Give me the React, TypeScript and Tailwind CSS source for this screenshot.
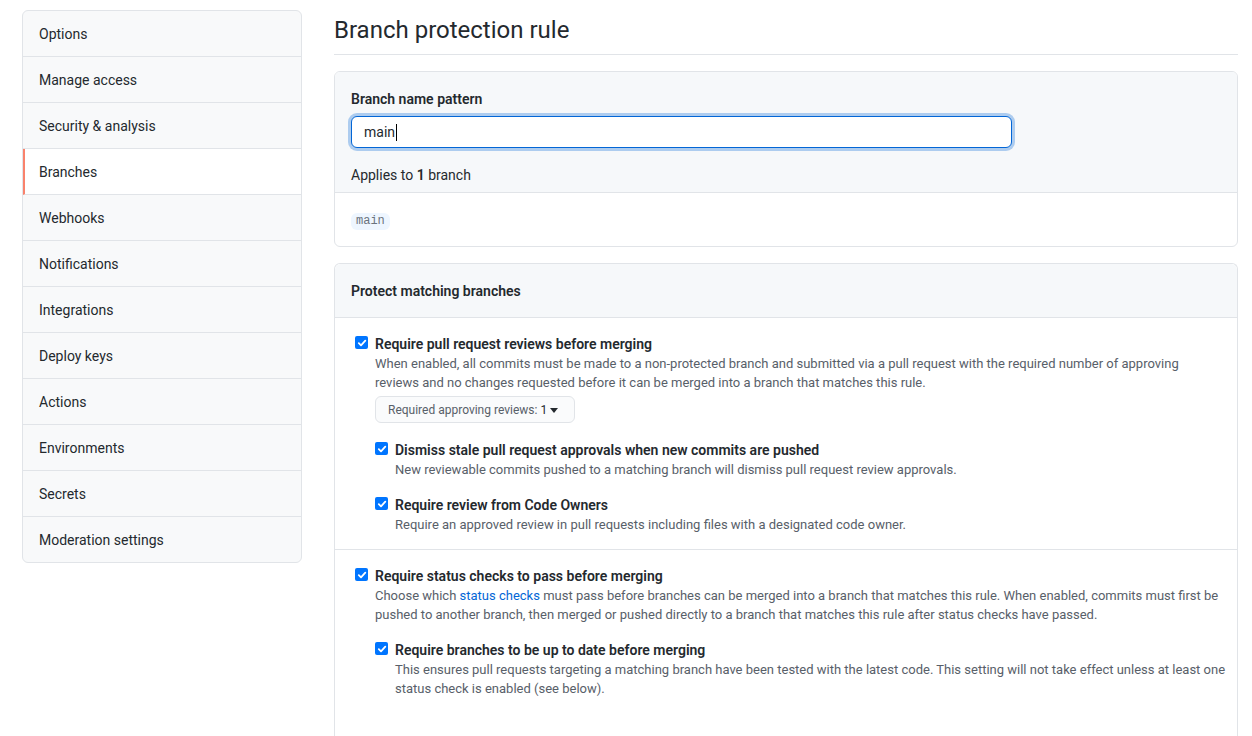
import React from "react";

const NAV = [
  "Options",
  "Manage access",
  "Security & analysis",
  "Branches",
  "Webhooks",
  "Notifications",
  "Integrations",
  "Deploy keys",
  "Actions",
  "Environments",
  "Secrets",
  "Moderation settings",
];

function Check() {
  return (
    <span className="mt-[3px] flex h-[13px] w-[13px] shrink-0 items-center justify-center rounded-[2px] bg-[#0075ff]">
      <svg width="10" height="10" viewBox="0 0 10 10" fill="none">
        <path d="M1.8 5.2 L4 7.3 L8.3 2.6" stroke="white" strokeWidth="1.8" strokeLinecap="round" strokeLinejoin="round" />
      </svg>
    </span>
  );
}

function Item({
  label,
  children,
  className = "",
}: {
  label: string;
  children?: React.ReactNode;
  className?: string;
}) {
  return (
    <div className={"flex " + className}>
      <div className="w-5 shrink-0">
        <Check />
      </div>
      <div className="min-w-0 flex-1">
        <div className="pt-px text-[14px] font-semibold leading-[20px] text-[#24292e]">{label}</div>
        {children}
      </div>
    </div>
  );
}

function Note({ children }: { children: React.ReactNode }) {
  return <p className="text-[13px] leading-[19px] text-[#586069]">{children}</p>;
}

export default function App() {
  return (
    <div
      className="flex min-h-screen gap-8 bg-white pl-[22px] pr-[14px] pt-[10px] text-[#24292e]"
      style={{ fontFamily: 'Roboto, "Noto Sans", sans-serif' }}
    >
      <nav className="w-[280px] shrink-0 self-start overflow-hidden rounded-md border border-[#e1e4e8] bg-[#f8f9fa]">
        {NAV.map((n, i) => (
          <div
            key={n}
            className={
              "flex items-center px-4 pt-[2px] text-[14px] " +
              (i < NAV.length - 1 ? "h-[46px] border-b border-[#e1e4e8] " : "h-[45px] ") +
              (n === "Branches" ? "border-l-2 border-l-[#f9826c] bg-white pl-[14px]" : "")
            }
          >
            {n}
          </div>
        ))}
      </nav>

      <main className="min-w-0 flex-1">
        <h1 className="border-b border-[#e1e4e8] pb-[6px] pt-[2px] text-[24px] font-normal leading-[36px]">
          Branch protection rule
        </h1>

        <section className="mt-4 overflow-hidden rounded-md border border-[#e1e4e8]">
          <div className="border-b border-[#e1e4e8] bg-[#f6f8fa] px-4 pb-[6px] pt-[17px]">
            <div className="text-[14px] font-semibold leading-[21px]">Branch name pattern</div>
            <div className="mt-[6px] flex h-[32px] w-[661px] items-center rounded-md border border-[#0366d6] bg-white px-3 text-[14px] shadow-[0_0_0_3px_rgba(3,102,214,0.3)]">
              main
              <span className="ml-[1px] inline-block h-[17px] w-px bg-black" />
            </div>
            <p className="mt-[17px] text-[14px] leading-[21px]">
              Applies to <span className="font-semibold">1</span> branch
            </p>
          </div>
          <div className="flex h-[53px] items-center px-4 pt-[4px]">
            <code
              className="rounded-md bg-[#eef6ff] px-[5px] py-[1px] text-[12px] leading-[15px] text-[#6a737d]"
              style={{ fontFamily: '"Liberation Mono", "DejaVu Sans Mono", monospace' }}
            >
              main
            </code>
          </div>
        </section>

        <section className="mt-4 rounded-t-md border border-b-0 border-[#e1e4e8]">
          <div className="rounded-t-md border-b border-[#e1e4e8] bg-[#f6f8fa] px-4 pb-[15px] pt-[17px] text-[14px] font-semibold leading-[21px]">
            Protect matching branches
          </div>

          <div className="border-b border-[#e1e4e8] pb-[15px] pl-5 pr-4 pt-[15px]">
            <Item label="Require pull request reviews before merging">
              <Note>
                When enabled, all commits must be made to a non-protected branch and submitted via a pull request with the
                required number of approving reviews and no changes requested before it can be merged into a branch that
                matches this rule.
              </Note>
              <div className="mt-[4px] flex h-[27px] w-[200px] items-center whitespace-nowrap rounded-md border border-[#e1e4e8] bg-[#fafbfc] px-3 text-[12px] text-[#586069]">
                Required approving reviews:&nbsp;<span className="text-[#24292e]">1</span>
                <span className="ml-[3px] mt-px h-0 w-0 border-x-[4px] border-t-[5px] border-x-transparent border-t-[#24292e]" />
              </div>
              <Item className="mt-4" label="Dismiss stale pull request approvals when new commits are pushed">
                <Note>New reviewable commits pushed to a matching branch will dismiss pull request review approvals.</Note>
              </Item>
              <Item className="mt-[15px]" label="Require review from Code Owners">
                <Note>Require an approved review in pull requests including files with a designated code owner.</Note>
              </Item>
            </Item>
          </div>

          <div className="pb-10 pl-5 pr-[8px] pt-[15px]">
            <Item label="Require status checks to pass before merging">
              <Note>
                Choose which <span className="text-[#0366d6]">status checks</span> must pass before branches can be merged
                into a branch that matches this rule. When enabled, commits must first be pushed to another branch, then
                merged or pushed directly to a branch that matches this rule after status checks have passed.
              </Note>
              <Item className="mt-[15px]" label="Require branches to be up to date before merging">
                <Note>
                  This ensures pull requests targeting a matching branch have been tested with the latest code. This setting
                  will not take effect unless at least one status check is enabled (see below).
                </Note>
              </Item>
            </Item>
          </div>
        </section>
      </main>
    </div>
  );
}
